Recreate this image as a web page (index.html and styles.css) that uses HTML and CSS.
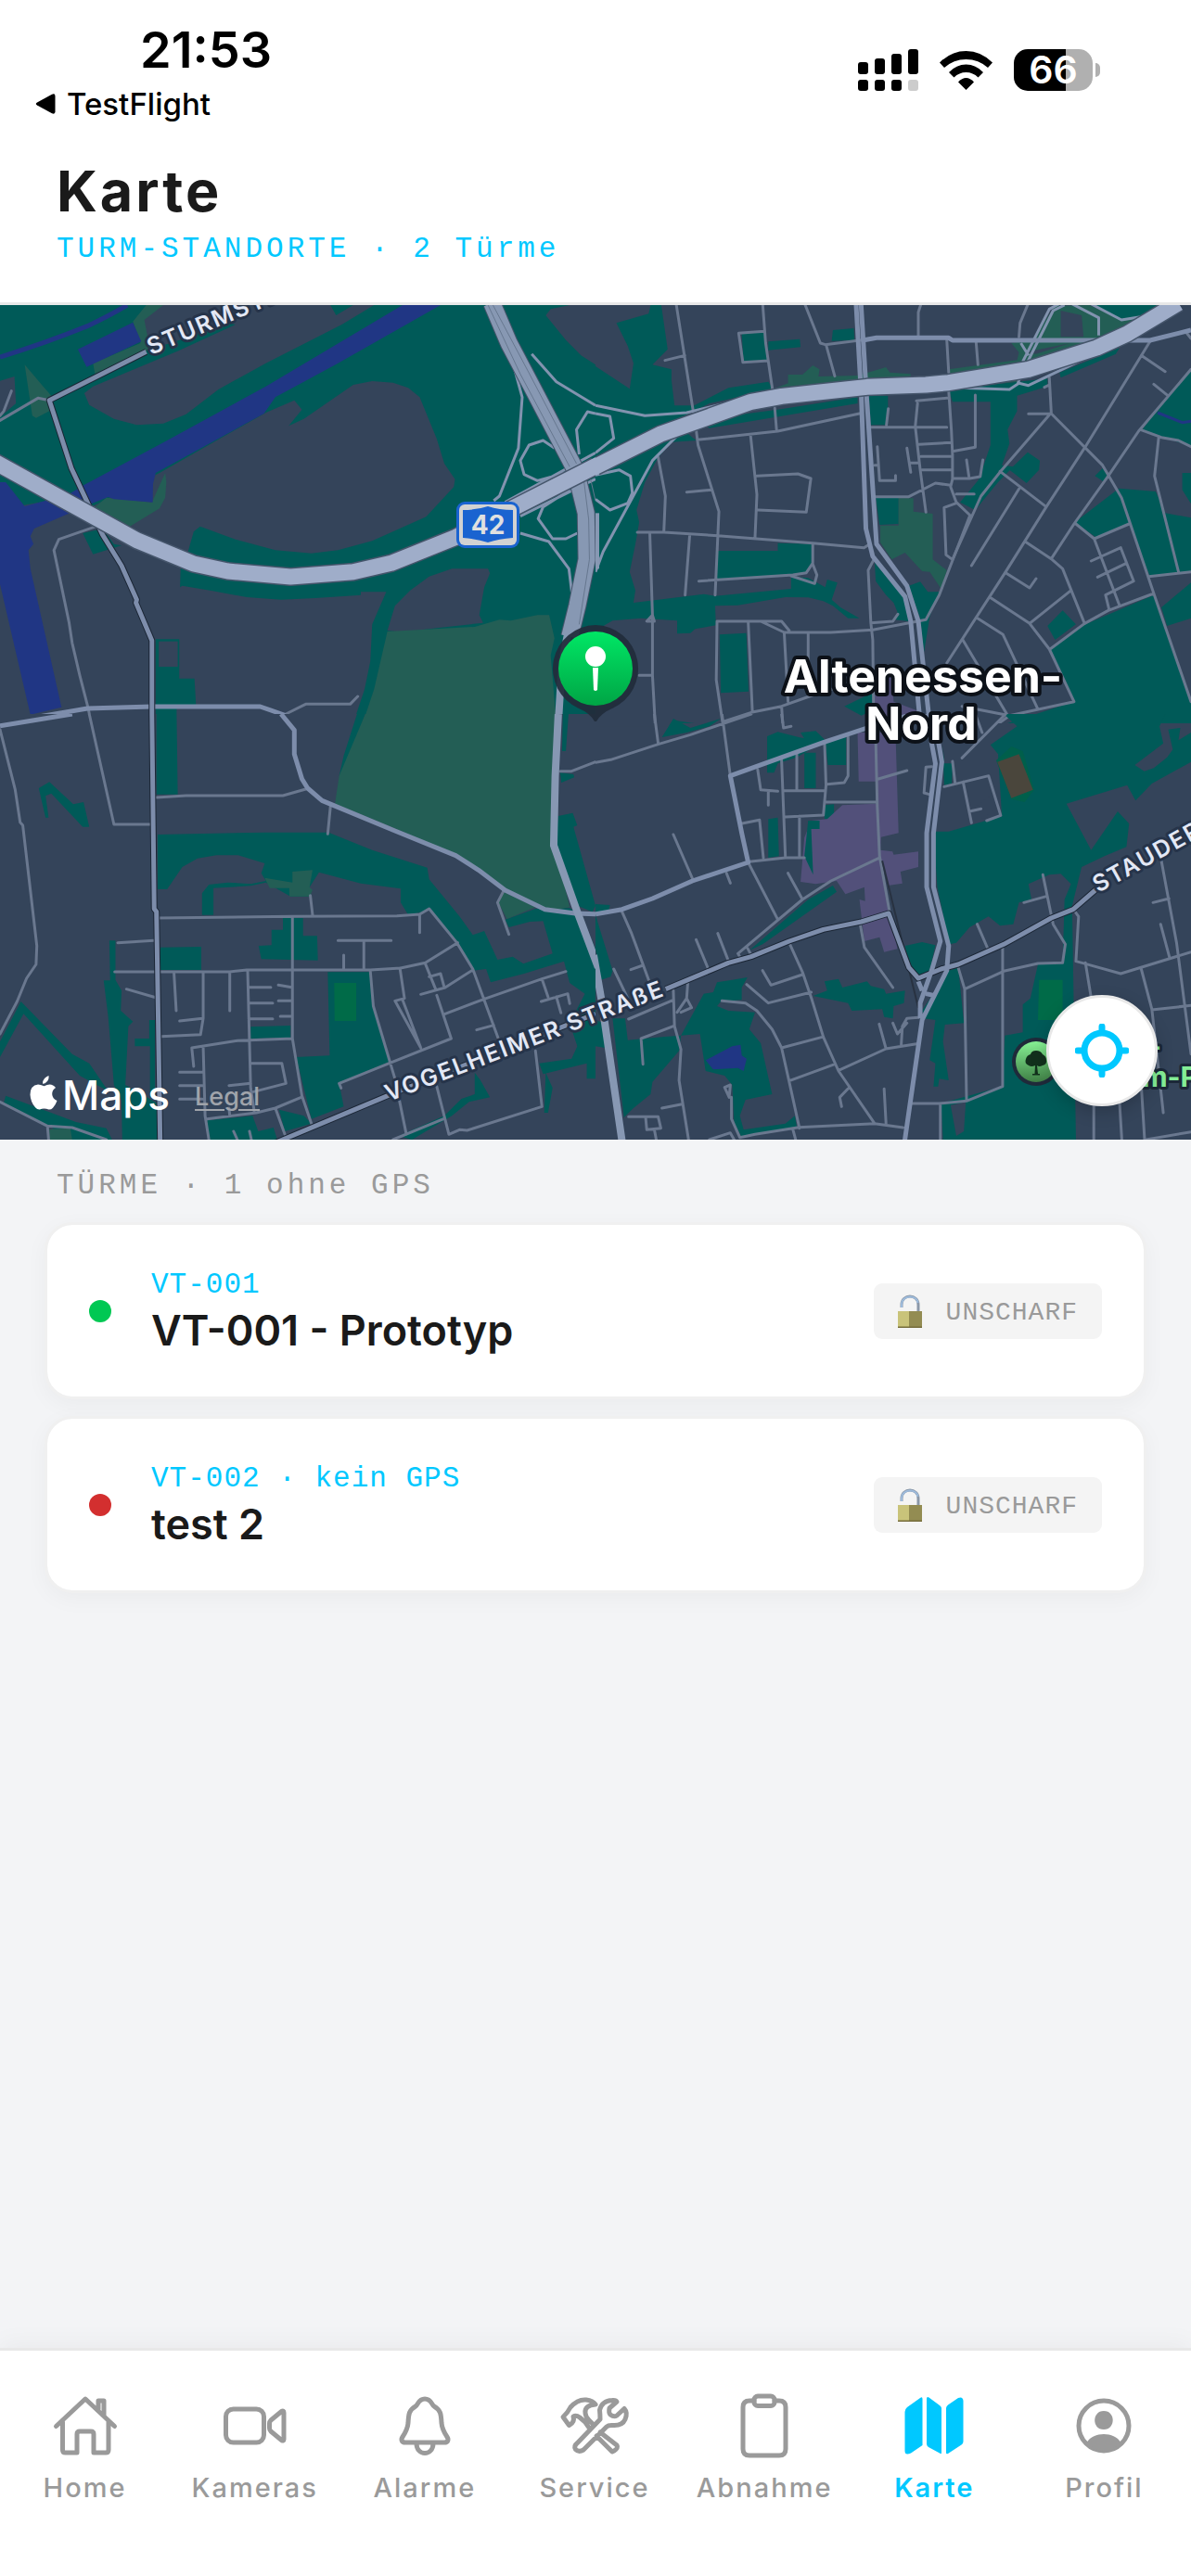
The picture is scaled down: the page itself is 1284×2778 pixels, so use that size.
FILE: index.html
```html
<!DOCTYPE html>
<html lang="de">
<head>
<meta charset="utf-8">
<meta name="viewport" content="width=device-width, initial-scale=1">
<title>Karte</title>
<link rel="stylesheet" href="styles.css">
</head>
<body>
<div class="app">
  <div class="status">
    <div class="status-left">
      <span class="time">21:53</span>
      <a class="back" href="#testflight">
        <svg width="22" height="22" viewBox="0 0 22 22" aria-hidden="true"><path d="M2 9.5 18 .8q3.500-1.500 3.500 2v16.400q0 3.500-3.500 2L2 12.500q-2.500-1.500 0-3z"/></svg>
        TestFlight
      </a>
    </div>
    <div class="status-right">
      <svg width="65" height="45" viewBox="0 0 65 45" aria-hidden="true">
        <rect x="0" y="14" width="11" height="13" rx="3"/><rect x="18" y="10" width="11" height="17" rx="3"/><rect x="36" y="5" width="11" height="22" rx="3"/><rect x="54" y="0" width="11" height="27" rx="3"/>
        <rect x="0" y="33" width="11" height="12" rx="3"/><rect x="18" y="33" width="11" height="12" rx="3"/><rect x="36" y="33" width="11" height="12" rx="3"/><rect x="54" y="33" width="11" height="12" rx="3" fill="#ccc"/>
      </svg>
      <svg width="57" height="42" viewBox="0 0 57 42" aria-hidden="true">
        <path d="M0 12.500Q12.500 0 28.500 0T57 12.500L52 18Q42 9 28.500 9T5 18z"/>
        <path d="M10 23Q18 14.500 28.500 14.500T47 23l-5.500 5.500Q36 23 28.500 23T15.500 28.500z"/>
        <path d="M20 33.500Q24 29 28.500 29T37 33.500L28.500 42z"/>
      </svg>
      <div class="battery"><span>66</span></div>
    </div>
  </div>

  <header class="head">
    <h1>Karte</h1>
    <p class="mono sub">TURM-STANDORTE · 2 Türme</p>
  </header>

  <section class="map" aria-label="Karte">
    <svg class="map-canvas" viewBox="0 0 1284 900">
      <defs>
        <linearGradient id="pin" x1="0" y1="0" x2="0" y2="1"><stop offset="0" stop-color="#00e765"/><stop offset="1" stop-color="#00a545"/></linearGradient>
        <linearGradient id="poi" x1="0" y1="0" x2="0" y2="1"><stop offset="0" stop-color="#86f294"/><stop offset="1" stop-color="#3f7f45"/></linearGradient>
      </defs>
      <rect class="land" width="1284" height="900"/>

      <!-- north-west tile -->
      <svg x="0" y="-9" width="642" height="460" viewBox="0 0 1568 1380" preserveAspectRatio="none">
        <path class="green" d="M0 0H1568V1380H0z"/>
        <path class="land" d="M420 570 700 375 775 335 795 365 760 418 800 395 930 285 980 273 1035 278 1075 295 1105 325 1150 460 1170 540 1198 590 1195 615 1122 712 980 790 890 820 820 830 725 820 620 785 527 743 510 760 495 825 476 860 474 940 480 935 560 952 650 972 740 980 830 975 950 965 950 955 1017 955 980 1060 975 1180 960 1270 930 1380H0V600L60 675 220 640 240 680z"/>
        <path class="land" d="M378 72 425 27H985L900 90 700 215 575 300 490 380 430 410 360 415 300 395 235 350 222 312 245 290 470 175 620 90 600 85 450 150 390 170z"/>
        <path class="land" d="M1568 220 1530 190 1490 140 1437 60 1450 40 1500 27H1568zM1020 1080 1040 1000 1080 950 1130 905 1190 880H1285L1290 895 1275 940 1262 1030 1272 1055 1150 1072 1060 1085zM0 272 38 258 42 345 0 390z"/>
        <path class="park" d="M1020 1083 1250 1068 1315 1045 1345 1048 1415 1030H1446L1460 1105 1450 1160 1465 1380H955L985 1270zM65 220 110 285 135 320 130 370 95 392 85 385zM350 80 385 27H430L380 75 395 170 250 250 245 215 370 150zM435 570 438 600 435 650 420 685 340 745 240 690 280 650 400 665z"/>
        <path class="green" d="M870 27H930L885 60zM410 1108H472V1235H512L516 1320H465V1380H410zM218 765 270 750 300 800 320 805 245 833z"/>
        <path class="land" d="M418 1115H468V1197H418z"/>
        <path class="water" d="M205 170 350 83 372 145 228 227zM1060 27H1160L890 215 800 275 725 325 695 378 410 570 403 605 402 665 300 655 285 648 240 670 90 750 80 775 88 800 75 820 80 880 162 1328 80 1352 0 930V600H15L65 678 180 640 220 610 440 465 700 290z"/>
        <path class="creek" d="M0 195Q120 150 230 95 290 60 335 27"/>
        <path class="minor" d="M0 400 100 328 130 335M30 305 10 370 0 385M255 742 155 785 142 820 182 1055 190 1120 210 1225 232 1330 240 1380M748 1353 805 1318H922L942 1293"/>
        <path class="main" d="M0 1380 230 1332 400 1326H685L748 1353 765 1380"/>
        <path class="case" d="M385 178 130 335 188 555 270 770 320 870 360 980 358 990 400 1112V1380"/>
        <path class="main" d="M385 178 130 335 188 555 270 770 320 870 360 980 358 990 400 1112V1380"/>
        <path class="ramp" d="M1345 190 1375 325 1365 490 1315 645 1300 660M1400 185 1465 275 1568 352M1460 490 1430 465 1393 480 1370 530 1380 575 1415 595 1490 570M1568 378 1547 372 1518 430 1525 510M1500 625 1430 680 1417 718 1455 783H1490L1520 765M1370 765 1445 792 1498 880 1510 1000M1568 505 1330 665M1568 590 1370 710"/>
        <path class="trunk-case" d="M1295 20 1340 150 1400 290 1515 560 1543 700 1545 850 1520 1000 1500 1100"/>
        <path class="trunk" d="M1295 20 1340 150 1400 290 1515 560 1543 700 1545 850 1520 1000 1500 1100"/>
        <path class="lane" d="M1298 27 1390 240 1518 540M1285 27 1370 250 1500 550M1538 600 1550 720 1552 850 1525 1060M1555 590 1568 660"/>
        <path class="trunk-thin" d="M1500 1060 1480 1180 1470 1380"/>
        <path class="motorway-case" d="M-20 530 360 788 510 864 600 888 765 906 930 890 1030 862 1200 778 1568 548"/>
        <path class="motorway" d="M-20 530 360 788 510 864 600 888 765 906 930 890 1030 862 1200 778 1590 534"/>
      </svg>

      <!-- north-east tile -->
      <svg x="642" y="-9" width="642" height="460" viewBox="0 0 1568 1380" preserveAspectRatio="none">
        <path class="green" d="M150 0H170L190 170 150 220 200 235 200 270 208 352H260L350 295 455 275 470 300 300 345 160 430 0 520V225L90 298 100 215 85 160 55 85 140 55zM0 520 240 440 265 465 200 470 165 520 130 600 108 690 115 730 105 800 90 890 105 950 100 990 285 962 315 968 515 945V905L560 910 605 940 610 915 637 925 622 980 645 1005 695 1040H665L625 1000 600 985 560 973 500 972 375 998 315 1000 317 1063 262 1075 250 1088 215 1090V1048L120 1040 45 1048 0 1080z"/>
        <path class="green" d="M385 120 445 115 455 205 390 212zM455 145 538 137 540 163 455 173zM625 108 680 102 682 140 622 143zM320 822H480V797L572 800V865L555 893 320 915zM327 1093 397 1088 403 1277 330 1282zM1300 20H1500L1440 62 1385 72zM265 400 480 365 690 325V345L300 425zM720 320H770V415H725zM930 300 1190 265V290L1110 320V370L1085 430 1090 475 1070 545 1100 550 1060 600 1000 690 960 665 1010 590 1040 480V340H940zM1222 245 1380 165 1370 185 1225 262zM1138 503 1170 530 1168 560 1135 603 1090 560zM738 650H798V735L748 738zM735 860 738 920 765 965 785 990 795 1020 790 1045 825 1050 810 970zM825 935 855 922 875 955H905L880 1035 865 1150 855 1040zM1568 240 1500 330 1440 430 1568 485zM1378 620 1475 630 1500 700 1568 715V890L1460 905 1405 735 1320 780 1262 730zM1545 570H1568V670L1545 625zM1568 925V1040L1505 1065 1490 1005zM1195 1140 1290 1060 1470 965 1568 1310V1380H1085L1260 1310zM1190 1065 1230 1015 1265 1060 1210 1110zM1315 580 1335 555 1350 580 1340 600zM655 1325 730 1280 735 1335 700 1355zM205 1370 260 1380H205z"/>
        <path class="park" d="M470 298 507 280V252H545L572 222 590 235 587 258 690 255 765 228 775 245 830 250V262L700 285zM930 235 1110 205 1115 180 1095 150 1150 140 1210 30 1300 27 1385 75 1430 70 1330 150 1130 225 930 250zM950 295 1110 275 1120 260 1000 275zM798 652H837V695L888 702V850L925 885 910 945 880 890 860 888 815 828 780 850 750 795V740H798z"/>
        <path class="land" d="M1225 45 1280 60 1285 130H1225zM1130 180 1250 150 1160 185z"/>
        <path class="shops" d="M765 1225H780L785 1310 850 1340 860 1380H735V1290z"/>
        <path class="creek-thin" d="M1480 375 1545 407 1568 403"/>
        <path class="minor" d="M212 20 265 430 270 480 325 695 315 965M183 206 235 190M440 20 448 150 466 300M445 112 377 118 388 212 455 207M550 20 592 150 605 155 700 140M607 155 630 257M858 20 850 50V130M925 140 930 245M1002 145 1007 220M1140 20 1118 85 1115 130M268 463 480 435 695 378M472 360 477 435M408 445 425 640 420 780M425 580 533 573 567 588 555 697 428 690M240 632 305 625M165 520 184 645 180 760M110 762H180L322 773 572 797 707 812 722 800M143 765 150 1030 135 1050H155L150 1030V1225L157 1380M248 773 236 965M272 920 520 900 555 893 572 862V800M572 865 583 900 577 928 515 903M115 1225H148M335 1380 318 1240 320 1050H490L510 1080M435 1050 497 1086H620L730 1078 870 1045 905 965 985 710M402 1050 413 1340M497 1090 507 1310M560 1090V1230M335 1375 410 1345 490 1325 570 1290 660 1255M490 1325 493 1380M735 845 718 885 725 1055 730 1110 732 1320M725 1055 783 1050 796 1027"/>
        <path class="minor" d="M845 337 925 328M930 305 937 430 940 510M1000 318V487L940 500M725 422H925M771 362 766 415M848 345 842 420 855 560 870 697M852 478 935 472M857 517H940M860 560H940M742 485 748 595H790V578M735 545H745M820 490 830 568M828 538H850M738 647H825L895 603 935 610M940 510V590L935 615 950 665 987 708M940 588H985L1013 582 1020 528M977 528 983 580M950 638H997M950 668 918 682 923 835 937 848M1195 262 1200 375 1070 560 1015 645 940 850M1140 379H1198M1182 293 1195 285M1200 378 1335 545 1385 650 1470 960 1568 1310M1065 565 1187 680M1115 622 990 870M1460 145 1290 485 1187 680 1080 890 925 1185M1437 190 1500 242M1470 283 1507 320M1568 235 1430 435 1350 580 1260 735 1200 848M1555 115 1568 135M1435 430 1490 455 1535 465 1568 485M1483 455 1472 580 1535 890M1132 793 1200 848 1230 880 1287 1055M1262 732 1313 783 1405 735M1313 783 1380 1000M1305 855 1383 812 1417 920 1343 965 1352 1010M1322 907 1398 862M1457 905 1568 890M1080 893 1143 942 1160 912M1038 972 1143 1057 1250 952M1143 1057 1195 1140 1260 1310 1090 1355 965 1325M1003 1038 1073 1093 1165 1335M967 1110 1083 1350M1470 960 1350 1015 1287 1058 1197 1140M1090 1355 1040 1400"/>
        <path class="ramp" d="M0 352 130 385 240 375 410 325M0 378 38 387 48 458 0 505M0 577 62 560 92 580 97 635 85 668 38 690 0 655M215 450 150 530 20 825 0 890M1225 20 1195 40 1125 210M1235 27 1205 45 1138 210M1250 20 1325 68V125M1300 20 1385 75 1450 62M960 295 1090 300 1115 280 1140 287 1280 205M1120 150 1140 190M1125 230 1112 282"/>
        <path class="main" d="M700 142 740 133H930L940 141H1460L1568 108"/>
        <path class="avenue" d="M686 20 700 325 712 750 730 840 815 970 830 1050 855 1380M699 20 714 325 740 800 820 935 850 1050 880 1380"/>
        <path class="trunk-thin" d="M0 700V880"/>
        <path class="motorway-case" d="M0 550 170 445 410 340 490 322 715 292 870 285 930 278 1140 235 1320 165 1400 120 1535 20"/>
        <path class="motorway" d="M-20 562 170 445 410 340 490 322 715 292 870 285 930 278 1140 235 1320 165 1400 120 1535 20"/>
      </svg>

      <!-- south-west tile -->
      <svg x="0" y="441" width="642" height="470" viewBox="0 0 1568 1410" preserveAspectRatio="none">
        <path class="land" d="M0 0H1568V1410H0z"/>
        <path class="green" d="M412 0H465L468 260H412zM102 240 130 220 193 292 220 285 235 365H218L135 257 120 265 128 335H120zM415 390 700 383H865L980 440 1125 497 1130 535 1210 655 1245 715 1275 702 1310 795 1350 785 1378 808 1455 775 1430 670 1395 672 1340 690 1330 665 1410 630 1500 628 1530 650 1568 760V1180H1545V1130L1430 1165 1420 1130 1505 1115 1520 1075 1500 1000 1540 905 1500 870 1485 800 1380 840 1292 868 1280 825 1245 830 1200 730 1130 635 1075 650 1055 610V565L950 548 840 512 815 560 820 590H765L700 545 660 556 562 563V650H532V580L550 552 600 545 660 550 700 540 688 515 697 483 627 457H570L520 467 480 495 440 567H415zM940 0H962L905 190 893 200 905 135zM1475 190 1510 195 1512 205 1478 222zM1470 330 1508 320 1520 360 1510 365 1568 620 1560 640 1520 620 1462 430zM1482 0H1497L1490 120H1480zM422 755 530 753V828H422zM745 660H798V718H835L837 797 688 793 681 750 715 748V698H745zM660 1012 765 1008V1047L660 1050zM863 835H973L980 940 1025 1125 893 1195 905 1270 820 1310 780 1110 868 1105zM288 733H304V860L320 895 318 960 350 995 338 1010 330 1200 415 1260V1377H322L320 1250 300 1200 285 980 273 862H290zM55 930 190 1100 235 1130 285 1220 210 1170 62 970 0 1110V1060zM355 1050H393V990H408V1240H395V1075H355zM15 1235 200 1320 280 1340 295 1377H190L125 1330 10 1258zM545 1315 665 1300 680 1350 720 1338 730 1377H550zM735 1280 800 1300 820 1325 750 1350zM1250 1160 1265 1185 1290 1240 1235 1255 1190 1300 1085 1377 1050 1365 1170 1300 1215 1245 1250 1230zM1437 1160 1455 1210 1443 1290H1433z"/>
        <path class="park" d="M962 0H1465L1462 430 1500 625 1435 640 1330 570 1250 490 1200 460 1060 380 882 290 893 200zM1325 575 1410 625 1335 663 1312 610zM697 530 770 545V510L823 505 815 560 823 570 815 590H762V563H710zM130 1343 185 1340 190 1377H130z"/>
        <path class="pitch" d="M880 870H938V993H881z"/>
        <path class="minor" d="M0 50 40 245 53 350 60 360 97 750 95 810 70 855 45 930 0 1035M235 0 300 357H400M412 270 490 264H745L805 243M870 300 863 388M415 660 770 655 1045 653 1105 648 1130 630 1203 740 1245 825 1315 1060M817 587 823 650M1105 648V707M770 655V1050L795 1235 820 1325M310 740 405 733M302 834H605L650 828H975L1055 822 1120 805 1205 740M890 733H1030M958 735V825M905 780V825M333 890 412 918M458 835 464 960M535 835V985L528 1037 425 1043M473 993 533 985M605 835V960M652 828 660 1210 670 1290M655 884H713M733 877 768 884M655 935H718M733 928H768M655 986H718M738 978H768M510 1140 505 1080 625 1057 770 1050M535 1075 540 1300 550 1377M473 1159H533M473 1202H533M473 1246H533M660 1130H742L753 1195 668 1222M603 1202 660 1195M545 1310 675 1290 725 1275 793 1240M725 1275 750 1360M603 1275 605 1300M615 1350 625 1377M657 1350 662 1377M975 830 983 945 1040 1180 1070 1360M898 1210 893 1195 1025 1130 1188 1050 1150 910M1053 822 1065 920 1040 928 1108 1080 1060 925M1120 808 1147 890M1130 850 1160 840 1170 885M1108 907 1172 885 1245 828M1172 970 1275 922 1427 857 1490 833M1255 1022 1300 1007M1427 857 1443 915M1425 930 1495 905 1500 937M1465 915 1477 967M1340 713 1310 610 1327 570M1150 1205 1182 1360 1210 1345 1230 1347 1427 1270 1410 1090M1035 1377 1168 1310M0 1255 125 1333 190 1338 280 1377M125 1333 128 1377M1475 185H1505L1568 155"/>
        <path class="main" d="M0 38 190 0M740 0 775 52V130L795 210 810 240 848 280 1040 378 1200 458 1260 505 1330 570 1435 632 1515 645 1568 647"/>
        <path class="trunk-thin" d="M1470 0 1462 200 1458 425 1520 640 1575 820"/>
        <path class="case" d="M400 0 406 630 412 640 422 1400M700 1400 1040 1225 1568 970"/>
        <path class="main" d="M400 0 406 630 412 640 422 1400M700 1400 1040 1225 1568 970"/>
      </svg>

      <!-- south-east tile -->
      <svg x="642" y="441" width="642" height="470" viewBox="0 0 1568 1410" preserveAspectRatio="none">
        <path class="land" d="M0 40H1568V1410H0z"/>
        <path class="green" d="M0 615 38 618 35 635 0 650zM0 650 45 830 40 850 15 860 0 760zM175 75 205 15 250 45 330 15 300 40 240 60zM452 72 480 58 535 75 600 90 530 140 480 160 470 190H452zM550 125H580V240H550zM540 60 580 55 605 85 560 100zM605 90 660 75V165H612zM455 340 480 335 483 460 455 465zM603 295 628 292V340H603zM915 100 918 160H940L938 225 918 230zM815 750 860 738 895 748 880 830 850 855 830 830zM930 830 955 820 970 1000 920 1005 915 1060 930 1185 905 1180 902 1205H890L895 1130 880 1120 895 990 865 985 860 960zM573 912 610 895 603 865 640 857 650 885 715 865 725 880 760 890 765 905 815 895 812 935 785 945 783 985 760 980 755 955 675 960 665 935zM225 1040 285 905 310 900 320 868 360 860 400 852 385 885V925L330 930 320 945 350 960 420 965 405 1020 435 1065 465 1230 395 1248 380 1300 390 1345 500 1325 525 1300 530 1335 385 1370 365 1320 360 1200 340 1170 290 1155 275 1035zM45 985H78L85 1055 175 1045 225 1040 220 1090 150 1190 145 1230 100 1275 75 1305zM0 1075 25 1080 20 1000 0 990z"/>
        <path class="green" d="M1075 0H1500L1485 40 1495 95 1420 165 1445 185 1470 175 1505 140 1520 115 1508 50 1540 45 1535 85 1568 60V155L1465 225 1422 280 1400 230 1240 290 1305 440 1375 315 1405 355 1398 430 1340 460 1280 495 1255 620 1265 1377H915L910 1260 1070 1205 1078 1040 1125 1030V940L1145 920 1165 810 1230 805 1235 600 1252 550 1225 517 1195 520 1140 550 1148 600 1115 610 1100 680 1065 685 1035 655 985 690 950 740 932 745 900 560 890 380H930L1070 330 1060 130 1040 100 1110 40z"/>
        <path class="land" d="M935 1265 975 1255 970 1350 950 1365zM1060 300 1055 250 1000 300 1020 340z"/>
        <path class="meadow" d="M1055 150 1095 105 1125 120 1155 245 1130 285 1095 275z"/>
        <path class="court" d="M1058 155 1115 130 1152 245 1095 272z"/>
        <path class="pitch" d="M1168 860H1230V990H1165z"/>
        <path class="water" d="M290 1120 360 1075 382 1070 385 1105 398 1115 390 1155 375 1145 310 1150z"/>
        <path class="shops" d="M690 60H790L798 385 752 398 750 440 782 445 785 455 850 445V495L803 510 808 548 770 555 760 500 750 470 775 640 795 760 760 770 748 722 708 735 695 600 710 605 708 560 658 583 635 540 580 550 540 543 550 400 568 345 610 340 650 295 738 290V218H693z"/>
        <path class="green" d="M560 345H590V372H568L573 520 550 460zM405 765 440 745 635 575 625 555 560 600z"/>
        <path class="minor" d="M155 0 165 95M0 157 40 148 165 98 250 67 410 0M333 0 355 200M402 480 480 665M490 0 495 45 515 40M427 180 435 245 480 250M455 250V295M490 150 500 465M530 130V245M497 248H605M603 90 607 230 600 327 500 333M665 75V200L655 222 610 227M603 285H740M738 90 742 300 748 460 775 645M745 210 820 183M383 355 432 343 442 465M537 330V465M405 478 500 465H550M745 467 620 540 545 600 375 775 380 785M400 757 410 780M507 515 545 600M205 390 258 540M345 515 355 547M70 640 95 710 140 860M93 827 125 813M265 730 298 828M322 710 352 805M48 825 85 920M510 740 545 835 570 925 600 1045 640 1155 735 1325M440 830 462 877 545 843M398 875 455 935 568 900M697 680 708 755 783 885M333 928 395 935 425 960 465 1020 490 1080 510 1190 537 1340M490 1080 597 1045M510 1187 630 1133M640 1153 765 1083 845 1067M747 1003 765 1083M665 1212 643 1240 648 1270M380 1370 420 1360 535 1337 735 1325 810 1338M760 1213 765 1325M805 1070 808 1010 820 985 850 982M783 1000 795 1035 820 1000M205 895 208 1010 225 1085 220 1185 245 1377M243 870 240 920 215 965M240 920 253 950 225 965M87 987 205 925M125 1133 120 1050 205 1010M175 1275 228 1262M87 1303H165L172 1340 135 1345 132 1305M155 1345 160 1377M340 1208 352 1240 355 1200 340 1208M358 1240V1310L380 1370M300 1377 355 1355 365 1377M520 1345 527 1377"/>
        <path class="minor" d="M1080 0 965 142M1000 0 1018 60M940 153 947 225M918 235 1035 200 1067 328 1030 345M968 220 990 352M985 315 1015 307M885 170 870 172 865 255 885 262M1005 680 1035 765M1178 520 1205 680 1237 745 1230 805 1165 807 1075 832 972 890M1128 610 1187 590M955 820 972 890 977 1250M1072 750V1205L977 1252 905 1260H828M908 1260V1400M1260 635 1272 655 1265 800 1290 808 1383 840 1568 770M1490 475 1530 740 1568 1100M1468 610 1510 597M1488 680 1512 790M1290 805 1312 970V1400M1437 825 1465 955 1495 1290M1465 957 1568 943M1380 1260 1387 1400M1437 1200 1447 1400M1450 1377 1568 1352"/>
        <path class="rail" d="M755 475 850 950"/>
        <path class="main" d="M715 45 600 92 355 200 385 385 402 480 255 540 150 597 70 632 0 647M780 25 860 -15"/>
        <path class="case" d="M185 890 350 805 410 785 510 735 600 697 700 672 772 645 825 820 850 855 910 825 955 810 1075 745 1200 660 1258 632 1330 555"/>
        <path class="main" d="M185 890 350 805 410 785 510 735 600 697 700 672 772 645 825 820 850 855 910 825 955 810 1075 745 1200 660 1258 632 1330 555"/>
        <path class="avenue" d="M862 -90 880 60 895 160 872 385V560L908 735 885 830 855 935V985M888 -60 900 70 912 155 890 385V560L930 750 925 830 860 990 812 1400M850 865 860 895M870 905 890 910"/>
        <path class="trunk-thin" d="M-5 780 15 920 72 1400"/>
      </svg>

      <g class="street-name">
        <text transform="translate(163 54) rotate(-23)">STURMSTRASSE</text>
        <text transform="translate(419 859) rotate(-21)">VOGELHEIMER STRAßE</text>
        <text transform="translate(1184 634) rotate(-29)">STAUDERSTRASSE</text>
      </g>
      <g class="place">
        <text x="995" y="418">Altenessen-</text>
        <text x="993" y="469">Nord</text>
      </g>

      <rect x="492" y="212" width="68" height="50" rx="9" fill="#1a63d0"/>
      <rect x="495" y="215" width="62" height="44" rx="6" fill="#d2d2d2"/>
      <path d="M499 221Q514 221 526 217 538 221 553 221V251Q538 252 526 256 514 252 499 251z" fill="#1a63d0"/>
      <text class="shield" x="526" y="247">42</text>

      <g class="poi-name">
        <text x="1252" y="810" text-anchor="end">Kaiser-</text>
        <text x="1292" y="843" text-anchor="end">helm-P</text>
      </g>
      <circle cx="1117" cy="816" r="26" fill="#1f2a3a"/>
      <circle cx="1117" cy="816" r="22" fill="url(#poi)"/>
      <path d="M1115.500 829 1116 820Q1112 822 1109 820 1104 818 1106 813 1107 809 1111 808 1112 804 1117 804T1124 808Q1128 810 1128 814 1129 819 1124 820 1120 822 1118 820L1119 829H1121V830.500H1113V829z" fill="#12301c"/>

      <path d="M642 345a47 47 0 0 1 18 90q-12 5-17 14h-2q-5-9-17-14a47 47 0 0 1 18-90z" fill="#212c3b" opacity=".93"/>
      <circle cx="642" cy="392" r="40" fill="url(#pin)"/>
      <circle cx="642" cy="379" r="11" fill="#fff"/>
      <path d="M639 391h6l-1 24q-2 2-4 0z" fill="#fff"/>
    </svg>

    <div class="credit">
      <svg width="30" height="37" viewBox="0 0 30 37" aria-hidden="true"><path d="M20.500 0Q21 4 18.500 6.500 16.500 9 14 8.800 13.800 5.500 16 3 18 .8 20.500 0zM28 13Q24 15.500 24.200 20 24.500 25 29.500 27 28 31.500 25 34.700 23 36.800 20.500 36.500 18 35.500 15.500 35.500T11 36.500Q8.500 37 6 34.300 1 28.500.5 20.500.5 10.500 9 9.500 11.500 9.500 15.500 11.200 19 9.500 21.500 9.500 25.500 9.700 28 13z"/></svg>
      <span class="brand">Maps</span>
      <a class="legal" href="#legal">Legal</a>
    </div>
    <button class="locate" type="button" aria-label="Auf Türme zentrieren">
      <svg width="58" height="58" viewBox="0 0 58 58" aria-hidden="true"><circle cx="29" cy="29" r="19"/><path d="M29 3V9M29 49V55M3 29H9M49 29H55"/></svg>
    </button>
  </section>

  <main class="list">
    <h2 class="mono">TÜRME · 1 ohne GPS</h2>
    <ul>
      <li>
        <a class="card" href="#vt-001">
          <span class="dot on"></span>
          <span class="info"><span class="mono code">VT-001</span><span class="name">VT-001 - Prototyp</span></span>
          <span class="badge">
            <svg width="26" height="36" viewBox="0 0 26 36" aria-hidden="true"><path d="M4 14V11C4 -1 22-1 22 11V19" fill="none" stroke="#8b98a8" stroke-width="3"/><path d="M4 14V11C4 0 21 0 21.500 9" fill="none" stroke="#9dbbdc" stroke-width="2"/><path d="M0 18H26V36H0z" fill="#938c52"/><path d="M0 18H12V36H0z" fill="#c9c37a"/><path d="M0 34.500H26V36H0z" fill="#756c3b"/></svg>
            <span class="mono">UNSCHARF</span>
          </span>
        </a>
      </li>
      <li>
        <a class="card" href="#vt-002">
          <span class="dot off"></span>
          <span class="info"><span class="mono code">VT-002 · kein GPS</span><span class="name">test 2</span></span>
          <span class="badge">
            <svg width="26" height="36" viewBox="0 0 26 36" aria-hidden="true"><path d="M4 14V11C4 -1 22-1 22 11V19" fill="none" stroke="#8b98a8" stroke-width="3"/><path d="M4 14V11C4 0 21 0 21.500 9" fill="none" stroke="#9dbbdc" stroke-width="2"/><path d="M0 18H26V36H0z" fill="#938c52"/><path d="M0 18H12V36H0z" fill="#c9c37a"/><path d="M0 34.500H26V36H0z" fill="#756c3b"/></svg>
            <span class="mono">UNSCHARF</span>
          </span>
        </a>
      </li>
    </ul>
  </main>

  <nav class="tabs" aria-label="Navigation">
    <a href="#home"><svg viewBox="0 0 68 68" aria-hidden="true"><path d="M2.500 34.500 34 5 65.500 34.500M9.500 30V60q0 3 3 3H25V43q0-3 3-3H40q3 0 3 3V63H56q3 0 3-3V30M48 16V7H54V23"/></svg>Home</a>
    <a href="#kameras"><svg viewBox="0 0 68 68" aria-hidden="true"><rect x="2.500" y="16" width="41" height="36" rx="8"/><path d="M62.500 18.500 51 28q-1.500 1.500-1.500 3.500v5q0 2 1.500 3.500L62.500 49.500q2.500 1.500 2.500-1V20q0-3-2.500-1.500z"/></svg>Kameras</a>
    <a href="#alarme"><svg viewBox="0 0 68 68" aria-hidden="true"><path d="M13 52h42c4 0 5-3 3-6-4-6-5.500-9-6-15-.5-10-1-14-8-18-3-2-3-8-10-8s-7 6-10 8c-7 4-7.500 8-8 18-.5 6-2 9-6 15-2 3-1 6 3 6zM25 53c0 14 18 14 18 0"/></svg>Alarme</a>
    <a href="#service"><svg viewBox="0 0 68 68" aria-hidden="true"><path d="M0 24.500Q5 20 8 14 16 5 25 6 32 7 35 11 23 12 24 20 24 24 28 28L25 31 18 25Q14 22 11 24 13 30 6.500 33.500zM24.500 31 28 36M28 28 32 32M16 52 40 27Q40 22 39.500 17 42 7 53 6.500 57 6 58 8L50 15Q49 20 51 22 55 25 58 23L66 15.500Q70 20 67 27 64 34 54 33.500 49 33 47 35L22 60Q17 63 13.500 59.500 11 56 16 52zM40 41 58 55Q60 58 55 61L53 62 36 45"/></svg>Service</a>
    <a href="#abnahme"><svg viewBox="0 0 68 68" aria-hidden="true"><path d="M23 7H18q-7 0-7 7V59q0 7 7 7H50q7 0 7-7V14q0-7-7-7H45"/><rect x="23" y="2" width="22" height="10.500" rx="4"/></svg>Abnahme</a>
    <a class="active" href="#karte" aria-current="page"><svg viewBox="0 0 68 68" aria-hidden="true"><path d="M2.500 19q0-3 2.500-5L19 4q2.500-2 2.500 1V55L9 63.500q-6.500 3-6.500-2.500zM26 5q0-3 2.500-1.500L40 12q2 1.500 2 3V63q0 2-2 .5L28 57q-2-1.500-2-3.500zM47 15q0-2 2-3.500L60 4q5-2 5.500 3V51q0 2-2 3.500L49 64q-2 1-2-1z"/></svg>Karte</a>
    <a href="#profil"><svg viewBox="0 0 68 68" aria-hidden="true"><circle cx="34" cy="34" r="27"/><path class="solid" d="M34 18c13 0 13 20 0 20s-13-20 0-20zM15.500 52C23 40 45 40 52.500 52Q44 61 34 61T15.500 52z"/></svg>Profil</a>
  </nav>
</div>
</body>
</html>
```
FILE: styles.css
```css
* { box-sizing: border-box; }

body {
  margin: 0;
  font-family: Inter, "Liberation Sans", sans-serif;
  color: #1a1a1a;
  background: #f3f4f6;
}

a { color: inherit; text-decoration: none; }
h1, h2, p, ul { margin: 0; padding: 0; }
ul { list-style: none; }

.app {
  display: flex;
  flex-direction: column;
  min-height: 100vh;
}

.mono {
  font-family: "Liberation Mono", monospace;
  font-size: 31px;
  line-height: 36px;
  font-weight: 400;
}

/* status bar */
.status {
  display: flex;
  justify-content: space-between;
  align-items: flex-start;
  padding: 24px 98px 0 38px;
  color: #000;
  background: #fff;
}
.status-left { display: flex; flex-direction: column; gap: 8px; }
.time {
  padding-left: 113px;
  font-size: 54px;
  line-height: 60px;
  font-weight: 600;
}
.back {
  display: flex;
  align-items: center;
  gap: 12px;
  font-size: 33px;
  line-height: 40px;
  font-weight: 500;
}
.status-right {
  display: flex;
  align-items: center;
  gap: 23px;
  padding-top: 29px;
}
.battery {
  position: relative;
  width: 85px;
  margin-right: 8px;
  border-radius: 15px;
  background: linear-gradient(90deg, #000 66%, #b0b0b0 66%);
  color: #fff;
  font-size: 41px;
  line-height: 45px;
  font-weight: 600;
  text-align: center;
}
.battery::after {
  content: "";
  position: absolute;
  top: 15px;
  right: -8px;
  width: 5px;
  height: 15px;
  border-radius: 0 5px 5px 0;
  background: #b0b0b0;
}

/* page heading */
.head {
  padding: 38px 61px 39px;
  border-bottom: 3px solid #e8e8e8;
  background: #fff;
}
.head h1 {
  font-size: 61px;
  line-height: 72px;
  font-weight: 700;
  letter-spacing: 3px;
}
.sub {
  margin-top: 9px;
  color: #00c8ff;
  letter-spacing: 4px;
}

/* map */
.map { position: relative; overflow: hidden; }
.map-canvas { display: block; width: 100%; height: auto; }
.map-canvas path { vector-effect: non-scaling-stroke; }
.land { fill: #34445a; }
.green { fill: #005a58; }
.park { fill: #235e55; }
.pitch { fill: #006b48; }
.meadow { fill: #005f4b; }
.court { fill: #4a463c; }
.water { fill: #203684; }
.shops { fill: #52507a; }
.creek, .creek-thin, .minor, .main, .case, .ramp, .avenue, .rail, .trunk, .trunk-case, .trunk-thin, .lane, .motorway, .motorway-case {
  fill: none;
  stroke-linejoin: round;
}
.creek { stroke: #203684; stroke-width: 5px; }
.creek-thin { stroke: #203684; stroke-width: 3px; }
.minor { stroke: #6a788f; stroke-width: 3px; stroke-linecap: round; }
.ramp { stroke: #8293af; stroke-width: 3px; }
.main { stroke: #7d8dab; stroke-width: 5px; }
.case { stroke: #1b2635; stroke-width: 7px; }
.avenue { stroke: #7d8dab; stroke-width: 5px; }
.rail { stroke: #283241; stroke-width: 2px; }
.trunk { stroke: #8798b3; stroke-width: 18px; }
.trunk-case { stroke: #45556b; stroke-width: 20px; }
.trunk-thin { stroke: #8798b3; stroke-width: 8px; }
.lane { stroke: #66778f; stroke-width: 1px; }
.motorway { stroke: #9fadc9; stroke-width: 17px; }
.motorway-case { stroke: #45556b; stroke-width: 20px; }

.street-name, .place, .poi-name {
  paint-order: stroke;
  stroke-linejoin: round;
}
.street-name {
  fill: #e3e8f5;
  stroke: #26344a;
  stroke-width: 6px;
  font-size: 25px;
  font-weight: 600;
  letter-spacing: 2px;
}
.place {
  fill: #fff;
  stroke: #0c1118;
  stroke-width: 8px;
  font-size: 50px;
  font-weight: 700;
  text-anchor: middle;
}
.shield {
  fill: #e0e0e0;
  font-size: 28px;
  font-weight: 700;
  text-anchor: middle;
}
.poi-name {
  fill: #84ee96;
  stroke: #1b2838;
  stroke-width: 6px;
  font-size: 30px;
  font-weight: 700;
}

.credit {
  position: absolute;
  left: 32px;
  bottom: 18px;
  display: flex;
  align-items: center;
  gap: 5px;
  color: #fff;
}
.credit svg { fill: #fff; margin-bottom: 6px; }
.brand { font-size: 44px; line-height: 60px; font-weight: 500; }
.legal {
  margin-left: 22px;
  padding-top: 4px;
  font-size: 27px;
  line-height: 36px;
  font-weight: 500;
  color: #a0a4ab;
  text-decoration: underline;
  text-underline-offset: 4px;
}

.locate {
  position: absolute;
  right: 36px;
  bottom: 36px;
  display: flex;
  align-items: center;
  justify-content: center;
  width: 120px;
  height: 120px;
  padding: 0;
  border: 3px solid #e8e8e8;
  border-radius: 50%;
  background: #fff;
  box-shadow: 0 6px 18px rgba(0, 0, 0, .18);
}
.locate svg {
  fill: none;
  stroke: #00c8ff;
  stroke-width: 7px;
  stroke-linecap: round;
}

/* tower list */
.list { padding: 32px 48px 48px; }
.list h2 {
  padding-left: 13px;
  margin-bottom: 21px;
  color: #9a9a9a;
  letter-spacing: 4px;
}
.list ul { display: flex; flex-direction: column; gap: 18px; }
.card {
  display: flex;
  align-items: center;
  gap: 43px;
  padding: 44px 45px;
  border: 3px solid #f0f0f0;
  border-radius: 30px;
  background: #fff;
  background-clip: padding-box;
  box-shadow: 0 6px 24px rgba(0, 0, 0, .04);
}
.dot { width: 24px; height: 24px; border-radius: 50%; }
.on { background: #00c853; }
.off { background: #d32f2f; }
.info {
  display: flex;
  flex: 1;
  flex-direction: column;
  gap: 4px;
  padding-top: 3px;
}
.code { color: #00c8ff; letter-spacing: 1px; }
.name { font-size: 45px; line-height: 54px; font-weight: 600; }
.badge {
  display: flex;
  align-items: center;
  gap: 26px;
  padding: 12px 26px;
  border-radius: 9px;
  background: #f4f4f4;
}
.badge .mono {
  padding-top: 4px;
  color: #9a9a9a;
  font-size: 28px;
  line-height: 31px;
  letter-spacing: 1px;
}

/* bottom navigation */
.tabs {
  display: grid;
  grid-template-columns: repeat(7, 1fr);
  margin-top: auto;
  padding: 47px 2px 77px 0;
  border-top: 3px solid #e8e8e8;
  background: #fff;
  box-shadow: 0 -6px 24px rgba(0, 0, 0, .04);
}
.tabs a {
  display: flex;
  flex-direction: column;
  align-items: center;
  gap: 15px;
  color: #9a9a9a;
  font-size: 29px;
  line-height: 36px;
  font-weight: 500;
  letter-spacing: 2px;
}
.tabs svg {
  width: 68px;
  height: 68px;
  overflow: visible;
  fill: none;
  stroke: currentColor;
  stroke-width: 5px;
  stroke-linecap: round;
  stroke-linejoin: round;
}
.tabs .solid { fill: currentColor; stroke: none; }
.tabs .active { color: #00c8ff; font-weight: 600; }
.tabs .active svg { fill: currentColor; stroke: none; }
```
